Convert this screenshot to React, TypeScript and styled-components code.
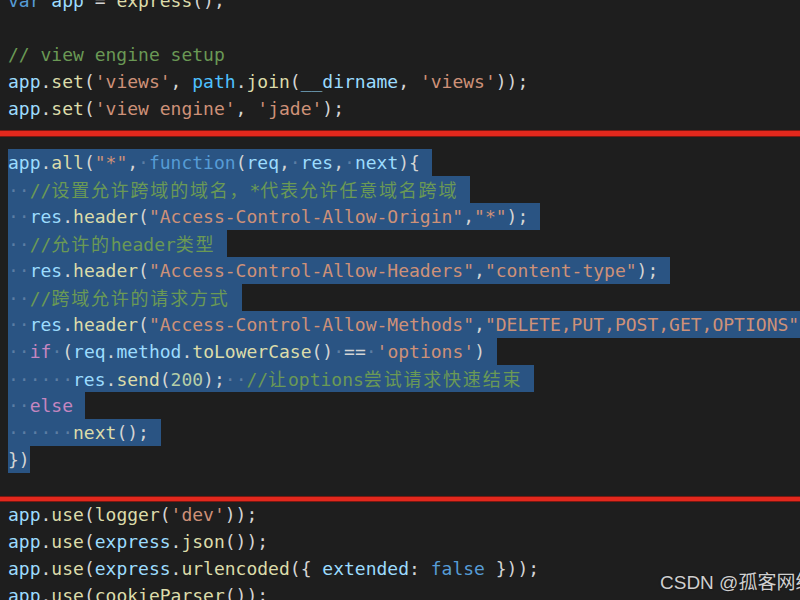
import React from "react";
import styled, { createGlobalStyle } from "styled-components";

type Kind = "kw" | "ctl" | "var" | "cst" | "fn" | "str" | "num" | "cmt" | "p";
type Tok = [string, Kind];

const COLORS: Record<Kind, string> = {
  kw: "#569cd6",
  ctl: "#c586c0",
  var: "#9cdcfe",
  cst: "#4fc1ff",
  fn: "#dcdcaa",
  str: "#ce9178",
  num: "#b5cea8",
  cmt: "#6a9955",
  p: "#d4d4d4",
};

const Global = createGlobalStyle`
  html, body {
    margin: 0;
    padding: 0;
    width: 800px;
    height: 600px;
    overflow: hidden;
    background: #1e1e1e;
  }
`;

const Screen = styled.div`
  position: relative;
  width: 800px;
  height: 600px;
  overflow: hidden;
  background: #1e1e1e;
`;

const Editor = styled.div`
  display: flex;
  flex-direction: column;
  margin-top: -13px;
  padding-left: 8px;
  font-family: "DejaVu Sans Mono", "Liberation Mono", "Noto Sans CJK SC", monospace;
  font-size: 18px;
  white-space: pre;
`;

const Row = styled.div`
  display: flex;
  align-items: center;
  height: 27px;
  line-height: 27px;
`;

const Sel = styled.span<{ $pad: number }>`
  display: inline-block;
  height: 27px;
  line-height: 27px;
  background: #2a5483;
  padding-right: ${(p) => p.$pad}px;
`;

const Tk = styled.span<{ $kind: Kind }>`
  color: ${(p) => COLORS[p.$kind]};
`;

const Dot = styled.span`
  color: rgba(190, 205, 225, 0.35);
`;

const Cjk = styled.span`
  font-family: "Noto Sans CJK SC", sans-serif;
  letter-spacing: 1.8px;
`;

const Divider = styled.div<{ $above: number; $below: number; $h: number }>`
  height: ${(p) => p.$h}px;
  margin: ${(p) => p.$above}px -8px ${(p) => p.$below}px;
  background: #e2281d;
  box-shadow: 0 -1px 0 #7a1812, 0 1px 0 #7a1812;
`;

const Watermark = styled.div`
  position: absolute;
  left: 660px;
  top: 567px;
  white-space: nowrap;
  font-family: "Liberation Sans", "Noto Sans CJK SC", sans-serif;
  font-size: 19px;
  color: #cfcfcf;
  text-shadow: 0 0 2px rgba(0, 0, 0, 0.6);
`;

const CJK_RE = /([\u3000-\u303f\u4e00-\u9fff\uff00-\uffef]+)/;

function renderText(text: string, selected: boolean, keyBase: string) {
  const parts = text.split(CJK_RE).filter((s) => s.length > 0);
  const out: React.ReactNode[] = [];
  parts.forEach((part, i) => {
    if (CJK_RE.test(part)) {
      out.push(<Cjk key={`${keyBase}-c${i}`}>{part}</Cjk>);
      return;
    }
    if (!selected) {
      out.push(part);
      return;
    }
    const segs = part.split(/( +)/).filter((s) => s.length > 0);
    segs.forEach((seg, j) => {
      if (/^ +$/.test(seg)) {
        out.push(<Dot key={`${keyBase}-d${i}-${j}`}>{"·".repeat(seg.length)}</Dot>);
      } else {
        out.push(seg);
      }
    });
  });
  return out;
}

function Tokens({ toks, selected }: { toks: Tok[]; selected: boolean }) {
  return (
    <>
      {toks.map(([t, k], i) => (
        <Tk key={i} $kind={k}>
          {renderText(t, selected, String(i))}
        </Tk>
      ))}
    </>
  );
}

function Line({ toks, selected = false, pad = 12 }: { toks: Tok[]; selected?: boolean; pad?: number }) {
  return (
    <Row>
      {selected ? (
        <Sel $pad={pad}>
          <Tokens toks={toks} selected />
        </Sel>
      ) : (
        <Tokens toks={toks} selected={false} />
      )}
    </Row>
  );
}

const top: Tok[][] = [
  [["var", "kw"], [" ", "p"], ["app", "var"], [" = ", "p"], ["express", "fn"], ["();", "p"]],
  [],
  [["// view engine setup", "cmt"]],
  [
    ["app", "var"], [".", "p"], ["set", "fn"], ["(", "p"], ["'views'", "str"], [", ", "p"],
    ["path", "cst"], [".", "p"], ["join", "fn"], ["(", "p"], ["__dirname", "var"], [", ", "p"],
    ["'views'", "str"], ["));", "p"],
  ],
  [["app", "var"], [".", "p"], ["set", "fn"], ["(", "p"], ["'view engine'", "str"], [", ", "p"], ["'jade'", "str"], [");", "p"]],
];

const selected: Tok[][] = [
  [
    ["app", "var"], [".", "p"], ["all", "fn"], ["(", "p"], ['"*"', "str"], [", ", "p"], ["function", "kw"],
    ["(", "p"], ["req", "var"], [", ", "p"], ["res", "var"], [", ", "p"], ["next", "var"], ["){", "p"],
  ],
  [["  ", "p"], ["//设置允许跨域的域名，*代表允许任意域名跨域", "cmt"]],
  [
    ["  ", "p"], ["res", "var"], [".", "p"], ["header", "fn"], ["(", "p"],
    ['"Access-Control-Allow-Origin"', "str"], [",", "p"], ['"*"', "str"], [");", "p"],
  ],
  [["  ", "p"], ["//允许的header类型", "cmt"]],
  [
    ["  ", "p"], ["res", "var"], [".", "p"], ["header", "fn"], ["(", "p"],
    ['"Access-Control-Allow-Headers"', "str"], [",", "p"], ['"content-type"', "str"], [");", "p"],
  ],
  [["  ", "p"], ["//跨域允许的请求方式", "cmt"]],
  [
    ["  ", "p"], ["res", "var"], [".", "p"], ["header", "fn"], ["(", "p"],
    ['"Access-Control-Allow-Methods"', "str"], [",", "p"], ['"DELETE,PUT,POST,GET,OPTIONS"', "str"], [");", "p"],
  ],
  [
    ["  ", "p"], ["if", "ctl"], [" (", "p"], ["req", "var"], [".", "p"], ["method", "var"], [".", "p"],
    ["toLowerCase", "fn"], ["() == ", "p"], ["'options'", "str"], [")", "p"],
  ],
  [
    ["      ", "p"], ["res", "var"], [".", "p"], ["send", "fn"], ["(", "p"], ["200", "num"], [");  ", "p"],
    ["//让options尝试请求快速结束", "cmt"],
  ],
  [["  ", "p"], ["else", "ctl"]],
  [["      ", "p"], ["next", "fn"], ["();", "p"]],
  [["})", "p"]],
];

const bottom: Tok[][] = [
  [["app", "var"], [".", "p"], ["use", "fn"], ["(", "p"], ["logger", "fn"], ["(", "p"], ["'dev'", "str"], ["));", "p"]],
  [["app", "var"], [".", "p"], ["use", "fn"], ["(", "p"], ["express", "var"], [".", "p"], ["json", "fn"], ["());", "p"]],
  [
    ["app", "var"], [".", "p"], ["use", "fn"], ["(", "p"], ["express", "var"], [".", "p"], ["urlencoded", "fn"],
    ["({ ", "p"], ["extended", "var"], [": ", "p"], ["false", "kw"], [" }));", "p"],
  ],
  [["app", "var"], [".", "p"], ["use", "fn"], ["(", "p"], ["cookieParser", "fn"], ["());", "p"]],
];

export default function App() {
  return (
    <>
      <Global />
      <Screen>
        <Editor>
          {top.map((t, i) => (
            <Line key={`t${i}`} toks={t} />
          ))}
          <Divider $above={9} $h={5} $below={13} />
          {selected.map((t, i) => (
            <Line key={`s${i}`} toks={t} selected pad={i === selected.length - 1 ? 0 : 12} />
          ))}
          <Divider $above={24} $h={4} $below={0} />
          {bottom.map((t, i) => (
            <Line key={`b${i}`} toks={t} />
          ))}
        </Editor>
        <Watermark>CSDN @孤客网络</Watermark>
      </Screen>
    </>
  );
}
